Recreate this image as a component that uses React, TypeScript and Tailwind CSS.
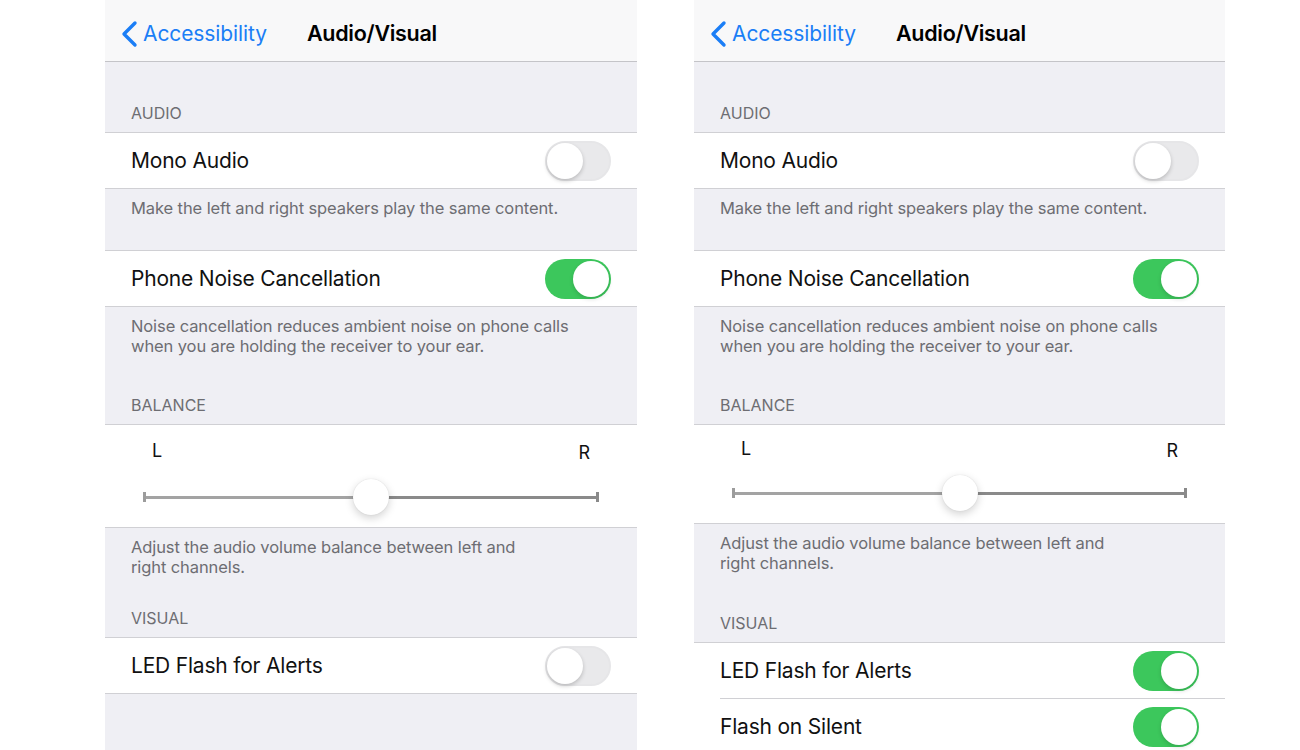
import type { ReactNode } from "react";

const FONT = "font-['Inter','Noto_Sans',sans-serif]";

function Toggle({ on }: { on: boolean }) {
  return (
    <div
      className={
        on
          ? "relative h-[40px] w-[66px] shrink-0 rounded-full bg-[#3cc75c]"
          : "relative h-[40px] w-[66px] shrink-0 rounded-full border-2 border-[#e6e6e8] bg-[#e9e9eb]"
      }
    >
      <div
        className={
          on
            ? "absolute right-[2px] top-[2px] h-[36px] w-[36px] rounded-full bg-white shadow-[0_2px_4px_rgba(0,0,0,0.15)]"
            : "absolute left-0 top-0 h-[36px] w-[36px] rounded-full bg-white shadow-[0_2px_4px_rgba(0,0,0,0.2)]"
        }
      />
    </div>
  );
}

function NavBar() {
  return (
    <div className="relative flex h-[62px] items-center border-b border-[#c4c4c8] bg-[#f8f8f9] pt-[6px]">
      <div className="flex items-center pl-[15px] text-[#1b7ef6]">
        <svg width="20" height="28" viewBox="0 0 20 28" className="mr-[3px]">
          <path d="M15 3 L4 14 L15 25" fill="none" stroke="#1b7ef6" strokeWidth="3.4" strokeLinecap="round" strokeLinejoin="round" />
        </svg>
        <span className="text-[21px] tracking-[-0.1px]">Accessibility</span>
      </div>
      <div className="absolute left-[202px] top-[17px] text-[21.5px] font-semibold tracking-[-0.3px] text-black">Audio/Visual</div>
    </div>
  );
}

function GroupHeader({ h, children }: { h: number; children: ReactNode }) {
  return (
    <div
      className="flex items-end px-[26px] pb-[9px] text-[16px] leading-[20px] text-[#6d6d72]"
      style={{ height: h }}
    >
      {children}
    </div>
  );
}

function Footer({ children }: { children: ReactNode }) {
  return (
    <div className="px-[26px] pt-[9px] text-[16.5px] leading-[20px] tracking-[-0.1px] text-[#6d6d72]">
      {children}
    </div>
  );
}

function ToggleRow({ label, on }: { label: string; on: boolean }) {
  return (
    <div className="flex h-[55px] items-center justify-between bg-white px-[26px]">
      <span className="text-[21px] tracking-[-0.2px] text-[#111]">{label}</span>
      <Toggle on={on} />
    </div>
  );
}

function BalanceRow({ h, labelTop, trackTop }: { h: number; labelTop: number; trackTop: number }) {
  return (
    <div className="bg-white px-[38px]" style={{ height: h }}>
      <div className="flex justify-between px-[9px] text-[18px] leading-[20px] text-[#111]" style={{ paddingTop: labelTop }}>
        <span>L</span>
        <span className="relative top-[2px]">R</span>
      </div>
      <div className="relative flex items-center" style={{ marginTop: trackTop }}>
        <div className="h-[10px] w-[3px] bg-[#9c9c9c]" />
        <div className="h-[3px] flex-1 bg-[#a3a3a3]" />
        <div className="h-[3px] flex-1 bg-[#8a8a8a]" />
        <div className="h-[10px] w-[3px] bg-[#8a8a8a]" />
        <div className="absolute left-1/2 top-1/2 h-[36px] w-[36px] -translate-x-1/2 -translate-y-1/2 rounded-full bg-white shadow-[0_3px_8px_rgba(0,0,0,0.18),0_0_1px_rgba(0,0,0,0.15)]" />
      </div>
    </div>
  );
}

function Divider({ inset }: { inset?: boolean }) {
  return (
    <div className={inset ? "bg-white pl-[26px]" : ""}>
      <div className="h-px bg-[#d0d0d4]" />
    </div>
  );
}

function LeftPanel() {
  return (
    <div className="h-[750px] w-[532px] shrink-0 overflow-hidden bg-[#efeff4]">
      <NavBar />
      <GroupHeader h={70}>AUDIO</GroupHeader>
      <Divider />
      <ToggleRow label="Mono Audio" on={false} />
      <Divider />
      <div className="h-[61px]">
        <Footer>Make the left and right speakers play the same content.</Footer>
      </div>
      <Divider />
      <ToggleRow label="Phone Noise Cancellation" on />
      <Divider />
      <Footer>
        Noise cancellation reduces ambient noise on phone calls
        <br />
        when you are holding the receiver to your ear.
      </Footer>
      <GroupHeader h={68}>BALANCE</GroupHeader>
      <Divider />
      <BalanceRow h={102} labelTop={16} trackTop={31} />
      <Divider />
      <Footer>
        Adjust the audio volume balance between left and
        <br />
        right channels.
      </Footer>
      <GroupHeader h={60}>VISUAL</GroupHeader>
      <Divider />
      <ToggleRow label="LED Flash for Alerts" on={false} />
      <Divider />
    </div>
  );
}

function RightPanel() {
  return (
    <div className="h-[750px] w-[531px] shrink-0 overflow-hidden bg-[#efeff4]">
      <NavBar />
      <GroupHeader h={70}>AUDIO</GroupHeader>
      <Divider />
      <ToggleRow label="Mono Audio" on={false} />
      <Divider />
      <div className="h-[61px]">
        <Footer>Make the left and right speakers play the same content.</Footer>
      </div>
      <Divider />
      <ToggleRow label="Phone Noise Cancellation" on />
      <Divider />
      <Footer>
        Noise cancellation reduces ambient noise on phone calls
        <br />
        when you are holding the receiver to your ear.
      </Footer>
      <GroupHeader h={68}>BALANCE</GroupHeader>
      <Divider />
      <BalanceRow h={98} labelTop={14} trackTop={29} />
      <Divider />
      <Footer>
        Adjust the audio volume balance between left and
        <br />
        right channels.
      </Footer>
      <GroupHeader h={69}>VISUAL</GroupHeader>
      <Divider />
      <ToggleRow label="LED Flash for Alerts" on />
      <Divider inset />
      <ToggleRow label="Flash on Silent" on />
    </div>
  );
}

export default function App() {
  return (
    <div className={`flex h-[750px] w-[1300px] gap-[57px] overflow-hidden bg-white pl-[105px] ${FONT}`}>
      <LeftPanel />
      <RightPanel />
    </div>
  );
}
